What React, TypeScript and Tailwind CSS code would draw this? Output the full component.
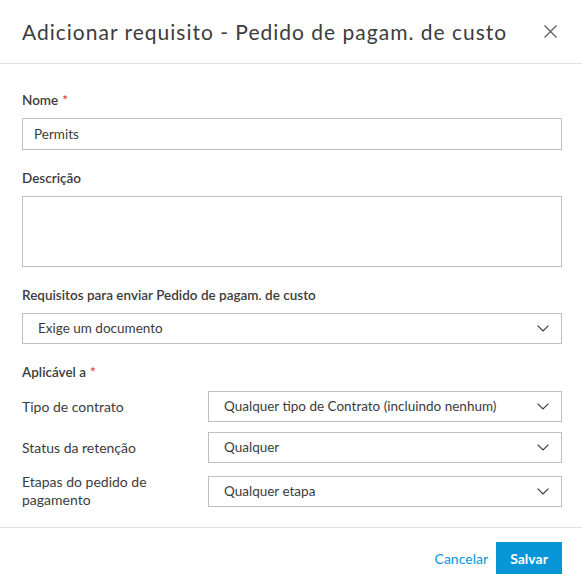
import React from "react";

const Chevron = () => (
  <svg width="12" height="7" viewBox="0 0 12 7" fill="none" className="shrink-0">
    <path d="M0.6 0.6 L6 6 L11.4 0.6" stroke="#3c3c3c" strokeWidth="1.2" />
  </svg>
);

const Select = ({ value }: { value: string }) => (
  <div className="flex h-[31px] flex-1 items-center justify-between border border-[#bfbfbf] bg-white pl-[15px] pr-[12px] text-[13.5px] text-[#3c3c3c]">
    <span>{value}</span>
    <Chevron />
  </div>
);

const Label = ({ text, required }: { text: string; required?: boolean }) => (
  <div className="text-[13.5px] font-semibold leading-[18px] text-[#3c3c3c]">
    {text}
    {required && <span className="ml-1 text-[#e2403f]">*</span>}
  </div>
);

const Row = ({ label, value }: { label: string; value: string }) => (
  <div className="flex items-center">
    <div className="w-[186px] shrink-0 pr-[20px] text-[14px] leading-[18px] text-[#3c3c3c]">{label}</div>
    <Select value={value} />
  </div>
);

export default function App() {
  return (
    <div className="flex h-[588px] w-[582px] flex-col bg-white font-['Lato',sans-serif]">
      <header className="flex h-[64px] shrink-0 items-center justify-between border-b border-[#e2e2e2] pl-[22px] pr-[25px]">
        <h1 className="text-[21px] font-normal tracking-[1px] text-[#3c3c3c]">Adicionar requisito - Pedido de pagam. de custo</h1>
        <svg width="13" height="13" viewBox="0 0 13 13" fill="none">
          <path d="M0.5 0.5 L12.5 12.5 M12.5 0.5 L0.5 12.5" stroke="#5a5a5a" strokeWidth="1.2" />
        </svg>
      </header>

      <main className="flex flex-1 flex-col pl-[22px] pr-[20px] pt-[27px]">
        <Label text="Nome" required />
        <div className="mt-[9px] flex h-8 items-center border border-[#bfbfbf] px-[11px] text-[13.5px] text-[#3c3c3c]">
          Permits
        </div>

        <div className="mt-[19px]">
          <Label text="Descrição" />
        </div>
        <div className="mt-[9px] h-[71px] border border-[#bfbfbf]" />

        <div className="mt-[19px]">
          <Label text="Requisitos para enviar Pedido de pagam. de custo" />
        </div>
        <div className="mt-[9px] flex">
          <Select value="Exige um documento" />
        </div>

        <div className="mt-[19px]">
          <Label text="Aplicável a" required />
        </div>
        <div className="mt-[10px] flex flex-col gap-[10px]">
          <Row label="Tipo de contrato" value="Qualquer tipo de Contrato (incluindo nenhum)" />
          <Row label="Status da retenção" value="Qualquer" />
          <Row label="Etapas do pedido de pagamento" value="Qualquer etapa" />
        </div>
      </main>

      <footer className="flex shrink-0 items-center justify-end gap-[8px] border-t border-[#e2e2e2] pb-[14px] pl-[22px] pr-[20px] pt-[14px]">
        <button className="px-0 text-[14px] text-[#0696d7]">Cancelar</button>
        <button className="flex h-8 w-[66px] items-center justify-center bg-[#0696d7] text-[14px] font-bold text-white">
          Salvar
        </button>
      </footer>
    </div>
  );
}
